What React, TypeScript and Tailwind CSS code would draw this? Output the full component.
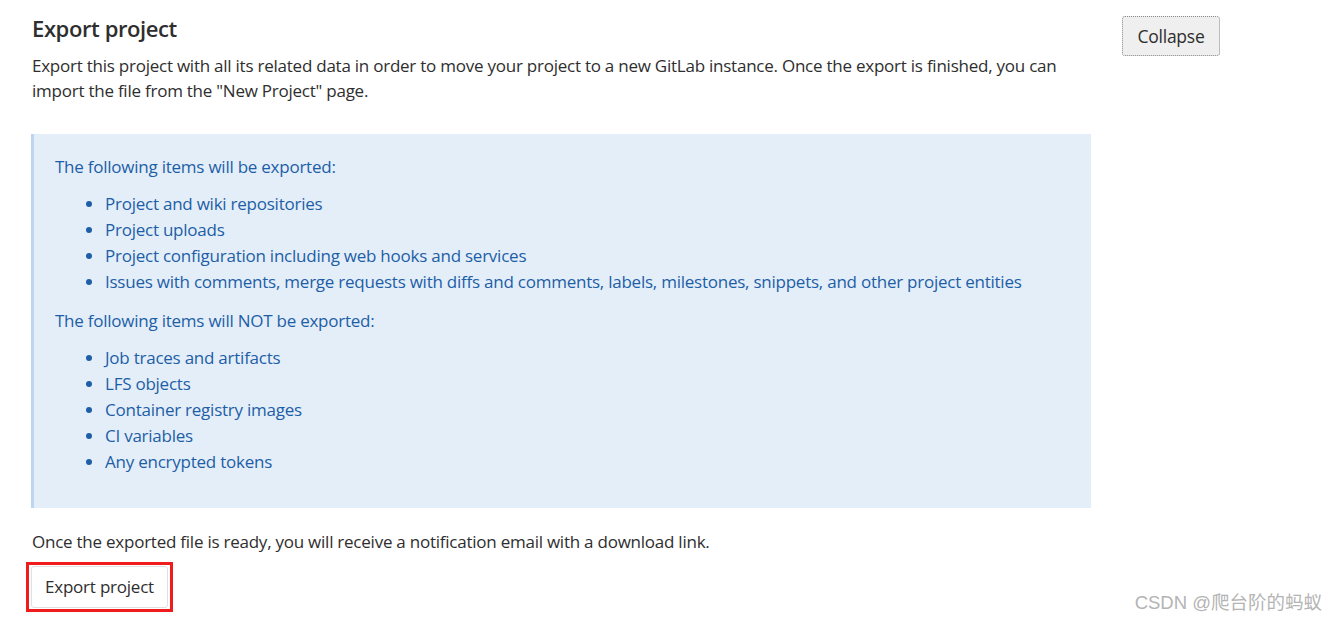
const exported = [
  "Project and wiki repositories",
  "Project uploads",
  "Project configuration including web hooks and services",
  "Issues with comments, merge requests with diffs and comments, labels, milestones, snippets, and other project entities",
]

const notExported = [
  "Job traces and artifacts",
  "LFS objects",
  "Container registry images",
  "CI variables",
  "Any encrypted tokens",
]

function ItemList({ items }: { items: string[] }) {
  return (
    <ul className="mt-[11px] mb-[13px] list-disc pl-[50px] marker:text-[#1d5ea6]">
      {items.map((item) => (
        <li key={item} className="h-[26px] leading-[26px]">
          {item}
        </li>
      ))}
    </ul>
  )
}

export default function App() {
  return (
    <div
      className="relative h-[625px] w-[1338px] overflow-hidden bg-white text-[17px] tracking-[-0.24px] text-[#2e2e2e]"
      style={{ fontFamily: '"Open Sans", "Noto Sans CJK SC", sans-serif' }}
    >
      <div className="flex pl-[31px] pt-[14px]">
        <div className="w-[1060px]">
          <h4 className="pl-px text-[22px] font-semibold leading-[28px] tracking-[-0.4px] text-[#2e2e2e]">Export project</h4>
          <p className="mt-[11px] pl-px leading-[25px]">
            Export this project with all its related data in order to move your project to a new GitLab instance. Once the export is
            finished, you can import the file from the "New Project" page.
          </p>

          <div className="mt-[31px] h-[374px] border-l-[3px] border-[#bcd6f0] bg-[#e4eef9] pl-[21px] pt-[20px] text-[#1d5ea6]">
            <p className="leading-[26px]">The following items will be exported:</p>
            <ItemList items={exported} />
            <p className="leading-[26px]">The following items will NOT be exported:</p>
            <ItemList items={notExported} />
          </div>

          <p className="mt-[21px] pl-px leading-[25px]">
            Once the exported file is ready, you will receive a notification email with a download link.
          </p>

          <div className="mt-[8px] -ml-[5px] inline-flex border-[3px] border-[#f01b1b] px-[2px] py-px">
            <button className="h-[42px] w-[137px] rounded-[3px] border border-[#e0e0e0] bg-white text-[17px] tracking-[-0.22px] text-[#2e2e2e]">
              Export project
            </button>
          </div>
        </div>

        <div className="ml-[31px] pt-[2px]">
          <button className="h-[40px] w-[98px] rounded-[3px] border border-dotted border-[#8a8a8a] bg-[#efefef] text-[17.5px] text-[#2e2e2e]">
            Collapse
          </button>
        </div>
      </div>

      <div
        className="absolute bottom-[8px] right-[16px] text-[18.5px] tracking-normal text-[#b4b4b4]"
        style={{ fontFamily: '"Liberation Sans", "Noto Sans CJK SC", sans-serif' }}
      >
        CSDN @爬台阶的蚂蚁
      </div>
    </div>
  )
}
